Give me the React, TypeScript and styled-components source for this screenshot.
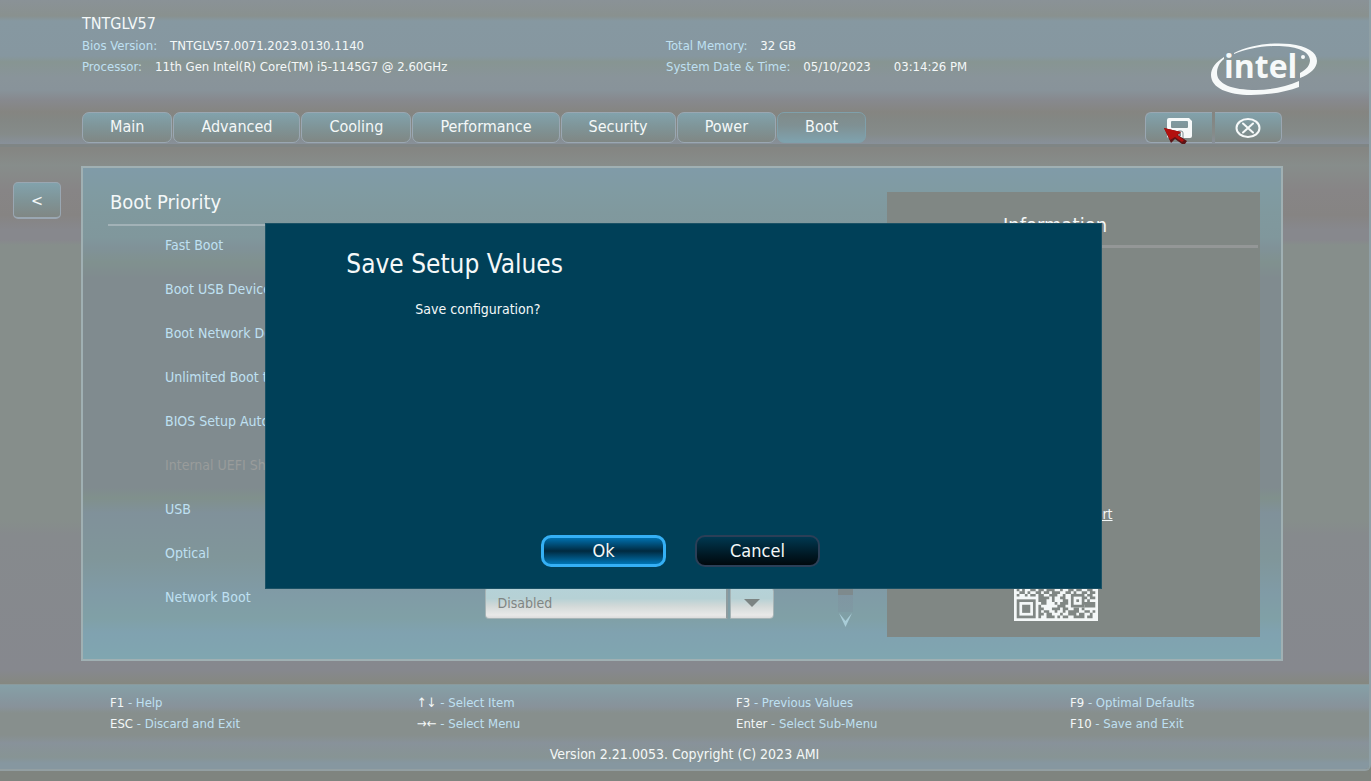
import React from 'react';
import styled, { createGlobalStyle, css } from 'styled-components';

const Global = createGlobalStyle`
  * { box-sizing: border-box; }
  body { margin: 0; background: #7f847f; }
  body, button, select { font-family: "DejaVu Sans Condensed", "DejaVu Sans", sans-serif; }
`;

const Page = styled.div`
  position: relative;
  display: flex;
  flex-direction: column;
  min-height: 100vh;
  padding-bottom: 10px;
  color: #f4f8f8;
  font-size: 13px;
  line-height: 21px;
`;

const Frame = styled.div`
  flex: 1;
  display: flex;
  flex-direction: column;
  border-right: 2px solid #8fa0a6;
  border-bottom: 2px solid #939fa2;
  border-bottom-right-radius: 6px;
  overflow: hidden;
  background: linear-gradient(#858683 0, #858683 150px, #878d8b 165px, #878586 190px, #868483 215px, #87888d 230px, #87888d 240px, #868e8b 245px, #868e8b 520px, #868a8d 535px, #86888e 670px, #858880 684px);
`;

const Header = styled.header`
  border-bottom: 3px solid #7f8585;
  background: linear-gradient(#8a9297 0, #89918f 16px, #8698a1 21px, #8697a0 56px, #879592 62px, #89949a 78px, #88939a 90px, #87898e 100px, #858581 112px, #838784 120px, #858b8a 134px, #88909a 144px);
`;

const Summary = styled.div`
  display: grid;
  grid-template-columns: 584fr 544fr 107px;
  height: 112px;
  padding: 13px 52px 0 82px;
`;

const Facts = styled.dl<{ $offset?: boolean }>`
  margin: 0;
  padding-top: ${(p) => (p.$offset ? '22px' : 0)};
`;

const Model = styled.div`
  font-size: 16px;
  line-height: 22px;
`;

const Fact = styled.div`
  display: flex;
  gap: 13px;
  white-space: nowrap;
  dt { color: #bfe0f2; }
  dd { margin: 0; }
  dd + dd { margin-left: 10px; }
`;

const Logo = styled.svg`
  width: 107px;
  height: 54px;
  margin-top: 29px;
  text { font: bold 32px "Open Sans", sans-serif; }
`;

const Toolbar = styled.div`
  display: flex;
  justify-content: space-between;
  padding: 0 87px 1px 82px;
`;

const Nav = styled.nav`
  display: flex;
  gap: 1px;
`;

const raised = css`
  background: linear-gradient(#82a2ac, #7f9497 50%, #808784);
  border: 1px solid #9aa7b2;
  color: inherit;
  padding: 0;
`;

const Tab = styled.button<{ $active?: boolean }>`
  ${raised}
  height: 31px;
  padding: 0 27px 2px;
  border-radius: 7px;
  font-size: 16px;
  line-height: 20px;
  ${(p) => p.$active && css`
    border-color: #7fa0ab;
    background: linear-gradient(#808b8a, #7f9194 45%, #7fa2ae);
  `}
`;

const Actions = styled.div`
  display: flex;
  gap: 3px;
`;

const Action = styled.button<{ $side: 'left' | 'right' }>`
  ${raised}
  display: grid;
  place-items: center;
  width: 67px;
  height: 31px;
  ${(p) => (p.$side === 'left'
    ? 'border-right: 0; border-radius: 6px 0 0 6px;'
    : 'border-left: 0; border-radius: 0 6px 6px 0;')}
`;

const Main = styled.main`
  flex: 1;
  display: flex;
  align-items: flex-start;
  gap: 20px;
  padding: 19px 86px 23px 13px;
`;

const Back = styled.button`
  ${raised}
  width: 48px;
  height: 37px;
  margin-top: 16px;
  border-bottom-width: 2px;
  border-radius: 5px;
  font-size: 16px;
`;

const Panel = styled.section`
  flex: 1;
  align-self: stretch;
  display: grid;
  grid-template-columns: minmax(0, 1fr) 15px 373px;
  column-gap: 34px;
  padding: 24px 21px 22px 25px;
  border: 2px solid #a0b0b3;
  background: linear-gradient(#809ba8 0, #809ba2 24px, #80999e 44px, #80979c 70px, #809298 80px, #80918f 94px, #808b8f 110px, #808b8f 320px, #80908c 330px, #80919a 345px, #80969a 390px, #809ba6 425px, #80a0a6 450px, #80a2b0 465px, #80a6b0 100%);
`;

const Title = styled.h1`
  height: 34px;
  margin: 0;
  padding-left: 2px;
  border-bottom: 2px solid #a2b2b7;
  font-size: 20px;
  font-weight: normal;
  line-height: 20px;
`;

const Options = styled.div`
  display: grid;
  gap: 12px;
  padding: 9px 0 0 57px;
`;

const Option = styled.div<{ $muted?: boolean }>`
  display: grid;
  grid-template-columns: 321fr 319fr;
  height: 32px;
  font-size: 14px;
  line-height: 20px;
  color: ${(p) => (p.$muted ? '#999c9b' : '#bfe0f2')};
`;

const Picker = styled.div`
  display: grid;
  grid-template-columns: 1fr 44px;
  gap: 2px;
  width: 289px;
`;

const pickerFace = css`
  height: 32px;
  border: 1px solid #a6b4b6;
  background: linear-gradient(#b5d2d8 0, #b6d1d5 35%, #d2d9d8 60%, #e9e9e8 90%, #dcdcdc);
`;

const Select = styled.select`
  ${pickerFace}
  appearance: none;
  padding: 0 11px;
  border-right: 2px solid #8f9c9f;
  border-radius: 4px 0 0 4px;
  font-size: 14px;
  color: #808583;
`;

const Arrow = styled.span`
  ${pickerFace}
  display: grid;
  place-items: center;
  border-radius: 0 4px 4px 0;
`;

const Scrollbar = styled.div`
  display: flex;
  flex-direction: column;
  margin: 35px 0 10px;
`;

const Track = styled.div`
  flex: 1;
  margin-bottom: 1px;
  background: linear-gradient(#7e8a8d calc(100% - 17px), #8096a2 calc(100% - 17px), #7f9aa3);
`;

const Info = styled.aside`
  display: flex;
  flex-direction: column;
  height: 445px;
  padding: 0 2px 16px;
  background: #808784;
`;

const InfoTitle = styled.h2`
  height: 56px;
  margin: 0;
  padding: 22px 37px 0 0;
  border-bottom: 3px solid #949797;
  font-size: 20px;
  font-weight: normal;
  line-height: 22px;
  text-align: center;
`;

const Support = styled.div`
  display: flex;
  flex-direction: column;
  align-items: center;
  gap: 12px;
  margin-top: auto;
  padding-right: 35px;
  a { color: inherit; font-size: 14px; }
`;

const Footer = styled.footer`
  padding: 7px 0 4px;
  border-top: 1px solid #8b9a9c;
  background: linear-gradient(#86a0a7 0, #8698a0 12px, #88929a 22px, #878f8d 28px, #878f8d 50px, #88929a 58px, #879494 72px, #8697a0 78px, #8697a0 100%);
`;

const Keys = styled.div`
  display: grid;
  grid-template-columns: 307fr 319fr 334fr 299fr;
  padding-left: 110px;
  color: #bfe0f2;
  b { font-weight: normal; color: #f4f8f8; }
`;

const Version = styled.p`
  margin: 10px 0 0;
  font-size: 14px;
  text-align: center;
`;

const Overlay = styled.div`
  position: absolute;
  inset: 0;
  padding: 223px 4px 0 0;
`;

const Dialog = styled.div`
  display: flex;
  flex-direction: column;
  width: 61vw;
  height: 366px;
  margin: 0 auto;
  padding: 24px 80px 21px;
  border: 1px solid #1b5165;
  background: #004058;
  h2 { margin: 0; font-size: 26px; font-weight: normal; line-height: 32px; }
  p { margin: 18px 0 0 69px; font-size: 14px; line-height: 22px; }
`;

const Buttons = styled.div`
  display: flex;
  justify-content: center;
  gap: 29px;
  margin-top: auto;
  padding-right: 6px;
`;

const DialogButton = styled.button<{ $primary?: boolean }>`
  width: 125px;
  height: 32px;
  padding: 0;
  border: 2px solid #2b3f57;
  border-radius: 10px;
  background: linear-gradient(#003850, #001a26 60%, #00080d);
  color: #f4f8f8;
  font-size: 18px;
  line-height: 20px;
  ${(p) => p.$primary && css`
    border: 3px solid #35b0f5;
    background: linear-gradient(#0070ae, #002a40 50%, #0075b4);
  `}
`;

const Cursor = styled.svg`
  position: absolute;
  right: 183px;
  top: 127px;
  width: 24px;
  height: 18px;
`;

const tabs = ['Main', 'Advanced', 'Cooling', 'Performance', 'Security', 'Power', 'Boot'];
const options = [
  'Fast Boot', 'Boot USB Devices First', 'Boot Network Devices Last',
  'Unlimited Boot to Network Attempts', 'BIOS Setup Auto-Entry',
  'Internal UEFI Shell', 'USB', 'Optical',
];
const keys = [
  [['F1', 'Help'], ['ESC', 'Discard and Exit']],
  [['↑↓', 'Select Item'], ['→←', 'Select Menu']],
  [['F3', 'Previous Values'], ['Enter', 'Select Sub-Menu']],
  [['F9', 'Optimal Defaults'], ['F10', 'Save and Exit']],
];

// Code modules, one string per row; the finder and alignment squares are drawn over them.
const modules = [
  '00000000010110010110000000000', '00000000011001101010000000000',
  '00000000001101001100000000000', '00000000010010110100000000000',
  '00000000011011001010000000000', '00000000000110110010000000000',
  '00000000010101010100000000000', '00000000011010011010000000000',
  '10110110100101100101101001101', '01001001011010011010010110010',
  '11010110110100101101101001011', '00101101001011010010011010110',
  '10010110101101001011010110100', '01101001010010110100101001011',
  '11011010110101101001011010110', '00100101101001010110100101101',
  '10110100110011001011010010110', '01101011001101100011010011010',
  '10100110110111001001101100110', '01101001101101110011010011011',
  '10010110110011100100000100110', '00000000111101001100000111011',
  '00000000111001000110000100100', '00000000011000101110000111111',
  '00000000100000011100000001111', '00000000110001110110011010000',
  '00000000101100100101111001101', '00000000110110001001110110010',
  '00000000100111010110011110110',
];

function Finder({ x, y, size = 7 }: { x: number; y: number; size?: number }) {
  return (
    <>
      <rect x={x} y={y} width={size} height={size} fill="#808784" />
      <rect x={x + 1} y={y + 1} width={size - 2} height={size - 2} fill="#f4f8f8" />
      <rect x={x + 2} y={y + 2} width={size - 4} height={size - 4} fill="#808784" />
    </>
  );
}

function SupportCode() {
  const path = modules
    .map((row, y) => [...row].map((c, x) => (c === '1' ? `M${x + 1} ${y + 1}h1v1h-1z` : '')).join(''))
    .join('');
  return (
    <svg width="84" height="84" viewBox="0 0 31 31" role="img" aria-label="Support code">
      <rect width="31" height="31" fill="#f4f8f8" />
      <path d={path} fill="#808784" />
      <Finder x={1} y={1} />
      <Finder x={23} y={1} />
      <Finder x={1} y={23} />
      <Finder x={21} y={21} size={5} />
    </svg>
  );
}

function SaveIcon() {
  return (
    <svg width="25" height="20" viewBox="0 0 25 20" fill="none">
      <path fillRule="evenodd" fill="#f6f9f9" d="M2 0H22L25 3V18Q25 20 23 20H2Q0 20 0 18V2Q0 0 2 0ZM5 3Q4 3 4 4V9Q4 10 5 10H20Q21 10 21 9V4Q21 3 20 3Z" />
      <path d="M10 20V15Q10 13 12 13H14Q16 13 16 15V20" stroke="#7f8f93" />
      <path d="M13 15V18" stroke="#7f8f93" strokeWidth="2" />
    </svg>
  );
}

function ExitIcon() {
  return (
    <svg width="26" height="20" viewBox="0 0 26 20" fill="none" stroke="#f6f9f9" strokeWidth="2">
      <ellipse cx="13" cy="10" rx="11.500" ry="9" />
      <path d="M8 5.500L18 14.500M18 5.500L8 14.500" strokeLinecap="round" />
    </svg>
  );
}

export default function App() {
  return (
    <Page>
      <Global />
      <Frame>
        <Header>
          <Summary>
            <div>
              <Model>TNTGLV57</Model>
              <Facts>
                <Fact><dt>Bios Version:</dt><dd>TNTGLV57.0071.2023.0130.1140</dd></Fact>
                <Fact><dt>Processor:</dt><dd>11th Gen Intel(R) Core(TM) i5-1145G7 @ 2.60GHz</dd></Fact>
              </Facts>
            </div>
            <Facts $offset>
              <Fact><dt>Total Memory:</dt><dd>32 GB</dd></Fact>
              <Fact><dt>System Date &amp; Time:</dt><dd>05/10/2023</dd><dd>03:14:26 PM</dd></Fact>
            </Facts>
            <Logo viewBox="0 0 107 54" fill="#f6f9f9">
              <path d="M24 11C40 3 62 0 80 2C97 4 107 10 107 19C107 26 100 32 90 36V31C97 27 100 23 100 18C99 8 84 4 66 4C50 4 37 7 24 12Z" />
              <path d="M14 15C6 20 1 26 1 33C1 46 18 53 41 53C58 53 76 50 89 45V39C76 45 60 48 46 48C22 48 7 42 7 31C7 26 9 21 14 17Z" />
              <text x="14" y="36">intel</text>
              <circle cx="93" cy="15" r="2" />
            </Logo>
          </Summary>
          <Toolbar>
            <Nav>{tabs.map((t) => <Tab key={t} $active={t === 'Boot'}>{t}</Tab>)}</Nav>
            <Actions>
              <Action $side="left" aria-label="Save"><SaveIcon /></Action>
              <Action $side="right" aria-label="Exit"><ExitIcon /></Action>
            </Actions>
          </Toolbar>
        </Header>
        <Main>
          <Back aria-label="Back">&lt;</Back>
          <Panel>
            <div>
              <Title>Boot Priority</Title>
              <Options>
                {options.map((o) => <Option key={o} $muted={o.startsWith('Internal')}><span>{o}</span></Option>)}
                <Option>
                  <label htmlFor="network">Network Boot</label>
                  <Picker>
                    <Select id="network"><option>Disabled</option></Select>
                    <Arrow><svg width="18" height="8"><path d="M1 0H17L9 8Z" fill="#7c8483" /></svg></Arrow>
                  </Picker>
                </Option>
              </Options>
            </div>
            <Scrollbar>
              <Track />
              <svg width="15" height="14"><path d="M1 0L7.500 14L14 0L7.500 8Z" fill="#a9cdd8" /></svg>
            </Scrollbar>
            <Info>
              <InfoTitle>Information</InfoTitle>
              <Support>
                <a href="#support">Intel NUC Support</a>
                <SupportCode />
              </Support>
            </Info>
          </Panel>
        </Main>
        <Footer>
          <Keys>
            {keys.map((col, i) => (
              <div key={i}>{col.map(([k, v]) => <div key={k}><b>{k}</b> - {v}</div>)}</div>
            ))}
          </Keys>
          <Version>Version 2.21.0053. Copyright (C) 2023 AMI</Version>
        </Footer>
      </Frame>
      <Overlay>
        <Dialog role="dialog" aria-labelledby="dialog-title">
          <h2 id="dialog-title">Save Setup Values</h2>
          <p>Save configuration?</p>
          <Buttons>
            <DialogButton $primary>Ok</DialogButton>
            <DialogButton>Cancel</DialogButton>
          </Buttons>
        </Dialog>
      </Overlay>
      <Cursor viewBox="0 0 24 18">
        <path d="M0 1L17 5L14 8L23 14L21 17H18L11 12L7 16Z" fill="#5c1416" />
        <path d="M0 1L17 5L13 8L20 13L18 15L11 10L6 13Z" fill="#b3100e" />
      </Cursor>
    </Page>
  );
}
